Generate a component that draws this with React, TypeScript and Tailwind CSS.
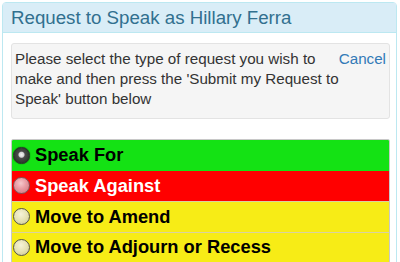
import React, { useState } from "react";

type Option = {
  id: string;
  label: string;
  row: string;
  text: string;
  radio: string;
};

const options: Option[] = [
  {
    id: "for",
    label: "Speak For",
    row: "bg-[#14e214]",
    text: "text-black",
    radio:
      "bg-[radial-gradient(circle_at_50%_45%,#f4f4f4_0%,#d4d4d4_22%,#4a4a4a_32%,#2e3a2e_70%,#5f6b5f_100%)] border-[#2a2a2a]",
  },
  {
    id: "against",
    label: "Speak Against",
    row: "bg-[#ff0000]",
    text: "text-white",
    radio:
      "bg-[radial-gradient(circle_at_45%_35%,#f6c8cc_0%,#e89aa2_45%,#c9747c_100%)] border-[#7a5a5c]",
  },
  {
    id: "amend",
    label: "Move to Amend",
    row: "bg-[#f7ec16]",
    text: "text-black",
    radio:
      "bg-[radial-gradient(circle_at_45%_35%,#f6f3d8_0%,#e6e2b4_50%,#c9c491_100%)] border-[#55554a]",
  },
  {
    id: "adjourn",
    label: "Move to Adjourn or Recess",
    row: "bg-[#f7ec16]",
    text: "text-black",
    radio:
      "bg-[radial-gradient(circle_at_45%_35%,#f6f3d8_0%,#e6e2b4_50%,#c9c491_100%)] border-[#55554a]",
  },
];

export default function App() {
  const [selected, setSelected] = useState("for");

  return (
    <div className="w-[400px] h-[262px] overflow-hidden bg-white p-[2px] font-['Liberation_Sans',Arial,sans-serif]">
      <div className="w-[395px] border border-[#bce8f1] rounded-t-[4px] bg-white">
        {/* Header */}
        <div className="h-[30px] bg-[#d9edf7] border-b border-[#bce8f1] pl-[8px] flex items-center">
          <h3 className="text-[18.7px] leading-none text-[#31708f] pt-[2px]">
            Request to Speak as Hillary Ferra
          </h3>
        </div>

        {/* Body */}
        <div className="pl-[8px] pr-[6px] pt-[10px]">
          <div className="bg-[#f5f5f5] border border-[#e3e3e3] rounded-[3px] pl-[3px] pr-[3px] pt-[5px] pb-[9px] text-[15.2px] leading-[20px] text-[#333]">
            <a className="float-right text-[#337ab7] ml-[4px]" href="#">
              Cancel
            </a>
            Please select the type of request you wish to make and then press
            the 'Submit my Request to Speak' button below
          </div>

          <div className="mt-[20px] border border-[#c8c8c8] rounded-t-[2px] overflow-hidden">
            {options.map((o, i) => (
              <label
                key={o.id}
                onClick={() => setSelected(o.id)}
                className={`flex items-center h-[30.5px] pl-[1px] gap-[5px] cursor-pointer ${o.row} ${
                  i > 1 ? "border-t border-[#d9d2a0]" : ""
                }`}
              >
                <span
                  className={`w-[17px] h-[17px] rounded-full border shrink-0 ${o.radio} ${
                    selected === o.id ? "shadow-[0_0_1px_#000]" : ""
                  }`}
                />
                <span
                  className={`text-[18.3px] font-bold leading-none ${o.text}`}
                >
                  {o.label}
                </span>
              </label>
            ))}
          </div>
        </div>
      </div>
    </div>
  );
}
